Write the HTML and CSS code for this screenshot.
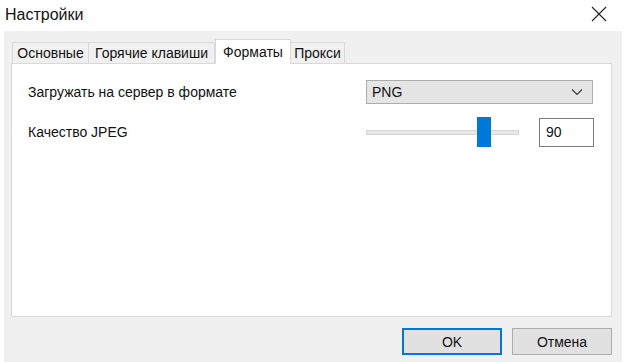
FILE: index.html
```html
<!DOCTYPE html>
<html lang="ru">
<head>
    <meta charset="UTF-8">
    <title>Настройки</title>
    <link rel="stylesheet" href="styles.css">
</head>
<body>
    <div class="titlebar">
        <span class="title">Настройки</span>
        <svg class="close" width="16" height="16" viewBox="0 0 16 16">
            <path d="M1 1 L15 15 M15 1 L1 15" stroke="#222" stroke-width="1.1" fill="none"/>
        </svg>
    </div>

    <div class="dialog">
        <div class="tabs">
            <div class="tab tab-main">Основные</div>
            <div class="tab tab-keys">Горячие клавиши</div>
            <div class="tab tab-formats active">Форматы</div>
            <div class="tab tab-proxy">Прокси</div>
        </div>

        <div class="panel">
            <div class="row">
                <label class="label">Загружать на сервер в формате</label>
                <div class="combo">
                    <span>PNG</span>
                    <svg width="12" height="8" viewBox="0 0 12 8">
                        <path d="M1 1.5 L6 6.5 L11 1.5" stroke="#333" stroke-width="1.1" fill="none"/>
                    </svg>
                </div>
            </div>
            <div class="row">
                <label class="label">Качество JPEG</label>
                <div class="quality">
                    <div class="slider">
                        <div class="track"></div>
                        <div class="thumb"></div>
                    </div>
                    <div class="spin">90</div>
                </div>
            </div>
        </div>

        <div class="buttons">
            <button class="btn btn-default">OK</button>
            <button class="btn">Отмена</button>
        </div>
    </div>
</body>
</html>
```

FILE: styles.css
```css
body {
    margin: 0;
    background: white;
    font-family: 'Liberation Sans', Arial, sans-serif;
    font-size: 14px;
    color: #111;
    overflow: hidden;
}
.titlebar {
    height: 31px;
    display: flex;
    align-items: center;
    justify-content: space-between;
    padding: 0 21px 0 5px;
}
.title {
    font-size: 16px;
    margin-top: -2px;
}
.close {
    margin-top: -3px;
}
.dialog {
    margin-left: 4px;
    width: 618px;
    height: 331px;
    background: #f0f0f0;
    box-sizing: border-box;
    padding: 8px 10px 0 7px;
}
.tabs {
    display: flex;
    align-items: flex-end;
    height: 24px;
    padding-left: 1px;
}
.tab {
    height: 21px;
    line-height: 21px;
    box-sizing: border-box;
    border: 1px solid #d9d9d9;
    border-bottom: none;
    background: #f0f0f0;
    text-align: center;
    margin-right: -1px;
}
.tab-main { width: 77px; }
.tab-keys { width: 127px; }
.tab-formats { width: 76px; }
.tab-proxy { width: 55px; }
.tab.active {
    position: relative;
    height: 25px;
    line-height: 24px;
    margin: 0 -1px -1px 1px;
    background: white;
    z-index: 1;
}
.panel {
    height: 254px;
    box-sizing: border-box;
    background: white;
    border: 1px solid #d9d9d9;
    padding: 16px 18px 0 16px;
    display: grid;
    grid-template-columns: 1fr 227px;
    grid-auto-rows: min-content;
    row-gap: 13px;
}
.row {
    display: contents;
}
.label {
    align-self: center;
}
.combo {
    height: 24px;
    box-sizing: border-box;
    background: #e5e5e5;
    border: 1px solid #adadad;
    display: flex;
    align-items: center;
    justify-content: space-between;
    padding: 0 9px 0 5px;
}
.quality {
    display: flex;
    align-items: center;
    justify-content: space-between;
    height: 30px;
}
.slider {
    position: relative;
    width: 153px;
    height: 30px;
}
.track {
    position: absolute;
    left: 0;
    right: 0;
    top: 13px;
    height: 5px;
    background: #e7e7e7;
    border: 1px solid #d6d6d6;
    box-sizing: border-box;
}
.thumb {
    position: absolute;
    left: 111px;
    top: 0;
    width: 14px;
    height: 30px;
    background: #0078d7;
}
.spin {
    width: 55px;
    height: 29px;
    box-sizing: border-box;
    border: 1px solid #7a7a7a;
    background: white;
    padding: 5px 0 0 6px;
    margin-right: -1px;
}
.buttons {
    display: flex;
    justify-content: flex-end;
    gap: 10px;
    margin-top: 11px;
    padding-right: -1px;
}
.btn {
    width: 100px;
    height: 27px;
    font-family: inherit;
    font-size: 14px;
    color: #111;
    background: #e1e1e1;
    border: 1px solid #adadad;
    margin: 0;
    padding: 0;
}
.btn-default {
    border: 2px solid #0078d7;
}
```
